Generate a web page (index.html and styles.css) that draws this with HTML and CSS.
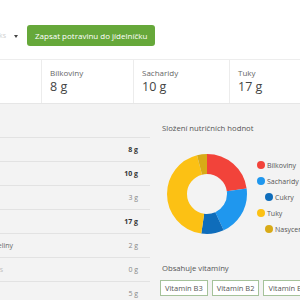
FILE: index.html
```html
<!DOCTYPE html>
<html lang="cs">
<head>
  <meta charset="UTF-8">
  <meta name="viewport" content="width=device-width, initial-scale=1.0">
  <title>Potravina - nutriční hodnoty</title>
  <link rel="stylesheet" href="styles.css">
</head>
<body>
  <div class="toolbar">
    <div class="unit"><span>ks</span></div>
    <span class="caret"></span>
    <button class="add">Zapsat potravinu do jídelníčku</button>
  </div>

  <div class="stats">
    <div class="stat first"></div>
    <div class="stat">
      <span class="stat-label">Bílkoviny</span>
      <span class="stat-value">8 g</span>
    </div>
    <div class="stat wide">
      <span class="stat-label">Sacharidy</span>
      <span class="stat-value">10 g</span>
    </div>
    <div class="stat last">
      <span class="stat-label">Tuky</span>
      <span class="stat-value">17 g</span>
    </div>
  </div>

  <div class="main">
    <div class="values">
      <div class="row"><div class="name"></div><b>8 g</b></div>
      <div class="row"><div class="name"></div><b>10 g</b></div>
      <div class="row"><div class="name"></div><span class="sub">3 g</span></div>
      <div class="row"><div class="name"></div><b>17 g</b></div>
      <div class="row"><div class="name"><span>kyseliny</span></div><span class="sub">2 g</span></div>
      <div class="row"><div class="name short"><span class="faint">s</span></div><span class="sub">0 g</span></div>
      <div class="row"><div class="name"></div><span class="sub">5 g</span></div>
    </div>

    <div class="side">
      <h2 class="side-title">Složení nutričních hodnot</h2>
      <div class="chart">
        <svg class="donut" width="80" height="80" viewBox="0 0 80 80">
          <g transform="rotate(-90 40 40)" fill="none" stroke-width="20">
            <circle cx="40" cy="40" r="30" stroke="#f2433a" stroke-dasharray="42.9 188.5" stroke-dashoffset="0"/>
            <circle cx="40" cy="40" r="30" stroke="#1f97ee" stroke-dasharray="38.3 188.5" stroke-dashoffset="-42.9"/>
            <circle cx="40" cy="40" r="30" stroke="#0f6dbb" stroke-dasharray="17.2 188.5" stroke-dashoffset="-81.2"/>
            <circle cx="40" cy="40" r="30" stroke="#fcc114" stroke-dasharray="82.2 188.5" stroke-dashoffset="-98.4"/>
            <circle cx="40" cy="40" r="30" stroke="#d8aa17" stroke-dasharray="7.9 188.5" stroke-dashoffset="-180.6"/>
          </g>
        </svg>
        <ul class="legend">
          <li><i class="dot red"></i>Bílkoviny</li>
          <li><i class="dot blue"></i>Sacharidy</li>
          <li class="indent"><i class="dot navy"></i>Cukry</li>
          <li><i class="dot yellow"></i>Tuky</li>
          <li class="indent"><i class="dot mustard"></i>Nasycené mastné kyseliny</li>
        </ul>
      </div>
      <h2 class="side-title vit-title">Obsahuje vitamíny</h2>
      <div class="tags">
        <span class="tag">Vitamín B3</span>
        <span class="tag">Vitamín B2</span>
        <span class="tag">Vitamín B6</span>
      </div>
    </div>
  </div>
</body>
</html>
```

FILE: styles.css
```css
/* Obecné */
body {
  font-family: "Open Sans", "Noto Sans", sans-serif;
  margin: 0;
  width: 300px;
  height: 300px;
  overflow: hidden;
  background-color: #ffffff;
  color: #555555;
}

/* Horní lišta */
.toolbar {
  height: 59px;
  box-sizing: border-box;
  padding-top: 25px;
  display: flex;
  align-items: flex-start;
}
.unit {
  width: 6px;
  height: 21px;
  display: flex;
  justify-content: flex-end;
  align-items: center;
  white-space: nowrap;
  font-size: 7px;
  color: #d0d0d0;
}
.caret {
  width: 0;
  height: 0;
  margin: 10px 0 0 8px;
  border-left: 2.5px solid transparent;
  border-right: 2.5px solid transparent;
  border-top: 3px solid #444444;
}
.add {
  margin-left: 9px;
  height: 21px;
  padding: 0 8px;
  background-color: #66a83a;
  color: #ffffff;
  border: none;
  border-radius: 3px;
  font-family: inherit;
  font-size: 8px;
  cursor: pointer;
}

/* Souhrn */
.stats {
  display: flex;
  height: 45px;
  box-sizing: border-box;
  border-top: 1px solid #ededed;
  border-bottom: 1px solid #e6e6e6;
}
.stat {
  width: 92px;
  box-sizing: border-box;
  padding: 7px 0 0 8px;
  border-right: 1px solid #ececec;
  display: flex;
  flex-direction: column;
}
.stat.first {
  width: 42px;
}
.stat.wide {
  width: 96px;
}
.stat.last {
  flex: 1;
  border-right: none;
}
.stat-label {
  font-size: 8px;
  line-height: 11px;
  color: #666666;
}
.stat-value {
  font-size: 12.5px;
  line-height: 17px;
  color: #444444;
}

/* Spodní část */
.main {
  display: flex;
  background-color: #f3f3f3;
  height: 196px;
}
.values {
  width: 150px;
  flex-shrink: 0;
  padding-top: 33px;
}
.row {
  height: 24px;
  box-sizing: border-box;
  border-top: 1px solid #e2e2e2;
  display: flex;
  align-items: center;
  justify-content: space-between;
  padding-right: 12px;
  font-size: 7px;
}
.row b {
  color: #333333;
  font-weight: 700;
}
.row .sub {
  color: #888888;
}
.name {
  width: 13px;
  display: flex;
  justify-content: flex-end;
  white-space: nowrap;
  color: #666666;
}
.name.short {
  width: 3px;
}
.faint {
  color: #c0c0c0;
}

.side {
  flex: 1;
  padding: 19px 0 0 12px;
  min-width: 0;
  overflow: hidden;
}
.side-title {
  margin: 0;
  font-size: 7.7px;
  font-weight: 400;
  line-height: 11px;
  color: #555555;
}
.chart {
  display: flex;
  margin-top: 20px;
}
.donut {
  display: block;
  flex-shrink: 0;
  margin-left: 5px;
}
.legend {
  list-style: none;
  margin: 3px 0 0 10px;
  padding: 0;
  white-space: nowrap;
}
.legend li {
  display: flex;
  align-items: center;
  height: 16px;
  font-size: 7px;
  color: #555555;
}
.legend li.indent {
  padding-left: 8px;
}
.dot {
  width: 8px;
  height: 8px;
  flex-shrink: 0;
  border-radius: 50%;
  margin-right: 2px;
}
.dot.red { background-color: #f2433a; }
.dot.blue { background-color: #1f97ee; }
.dot.navy { background-color: #0f6dbb; }
.dot.yellow { background-color: #fcc114; }
.dot.mustard { background-color: #d8aa17; }

.vit-title {
  margin-top: 26px;
}
.tags {
  display: flex;
  gap: 4px;
  margin-top: 6px;
  margin-left: -2px;
  white-space: nowrap;
}
.tag {
  height: 16px;
  box-sizing: border-box;
  padding: 0 4px;
  border: 1px solid #a5c29a;
  display: flex;
  align-items: center;
  font-size: 7.5px;
  color: #555555;
  background-color: #ffffff;
}
```
